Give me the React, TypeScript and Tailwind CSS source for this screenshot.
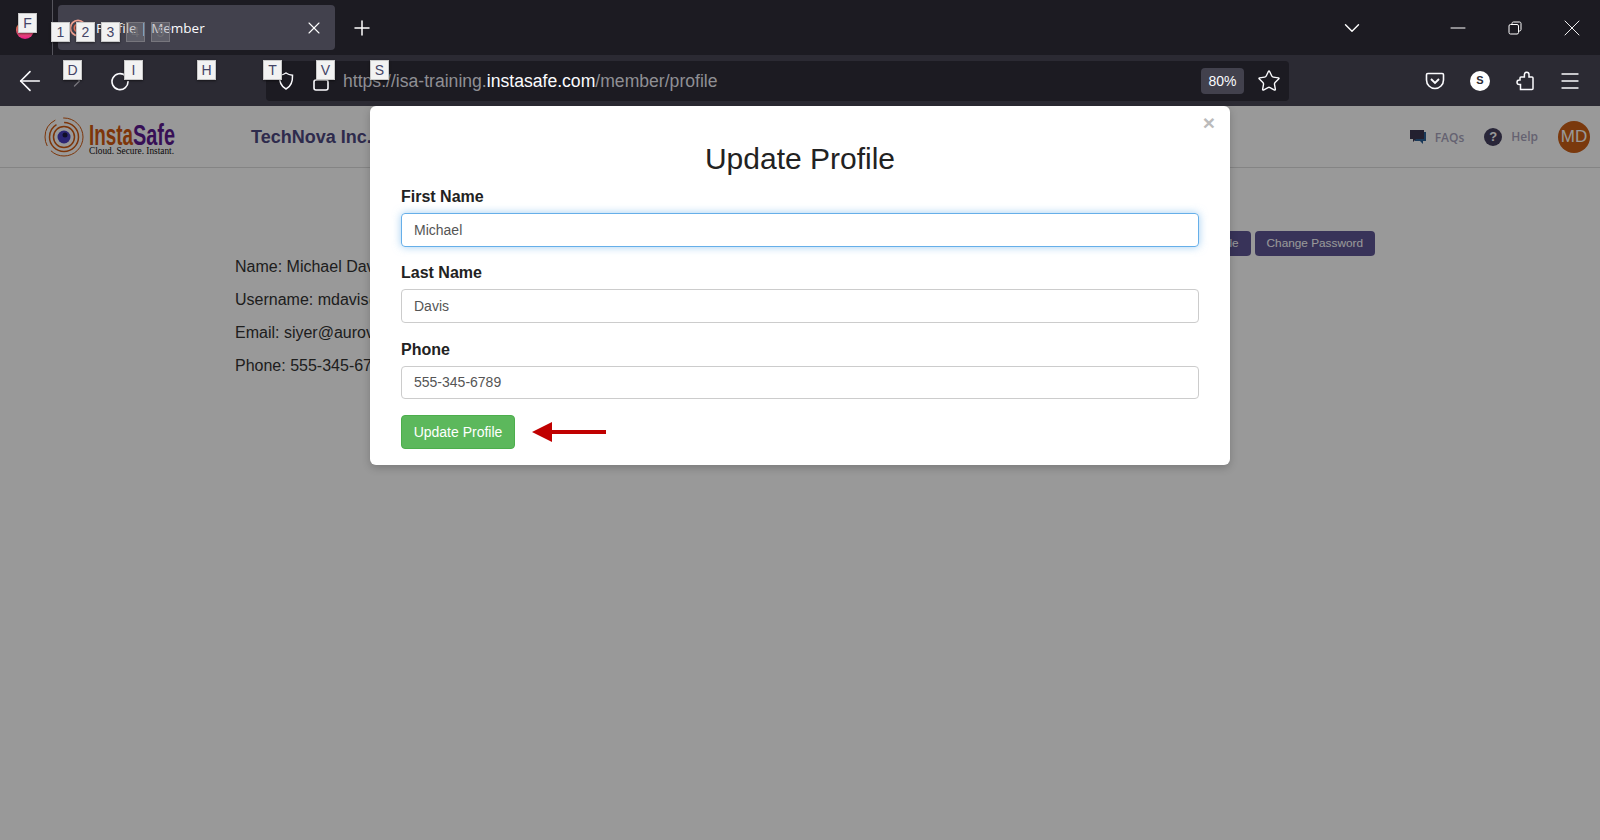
import { ArrowLeft, ChevronDown, ChevronRight, Menu, Minus, Plus, Star, X } from "lucide-react";

const hints = [
  { label: "F", pos: "left-[18px] top-[13px]", dim: false },
  { label: "1", pos: "left-[51px] top-[22px]", dim: false },
  { label: "2", pos: "left-[76px] top-[22px]", dim: false },
  { label: "3", pos: "left-[101px] top-[22px]", dim: false },
  { label: "4", pos: "left-[126px] top-[22px]", dim: true },
  { label: "5", pos: "left-[151px] top-[22px]", dim: true },
  { label: "D", pos: "left-[63px] top-[60px]", dim: false },
  { label: "I", pos: "left-[124px] top-[60px]", dim: false },
  { label: "H", pos: "left-[197px] top-[60px]", dim: false },
  { label: "T", pos: "left-[263px] top-[60px]", dim: false },
  { label: "V", pos: "left-[316px] top-[60px]", dim: false },
  { label: "S", pos: "left-[370px] top-[60px]", dim: false },
];

function Logo() {
  return (
    <svg width="136" height="44" viewBox="0 0 136 44" fill="none">
      <circle cx="20" cy="22" r="19" stroke="#d0590f" strokeWidth="1" strokeDasharray="44 6 30 8" />
      <circle cx="20" cy="22" r="14.5" stroke="#d0590f" strokeWidth="1.5" strokeDasharray="60 8" />
      <circle cx="20" cy="22" r="10.5" stroke="#d0590f" strokeWidth="1.5" />
      <circle cx="20" cy="22" r="6.5" fill="#4a3fc0" />
      <circle cx="21" cy="20" r="2.5" fill="#1c1840" />
      <text x="45" y="30" fontFamily="Liberation Sans, sans-serif" fontWeight="700" fontSize="29" textLength="44" lengthAdjust="spacingAndGlyphs" fill="#d0590f">
        Insta
      </text>
      <text x="89" y="30" fontFamily="Liberation Sans, sans-serif" fontWeight="700" fontSize="29" textLength="42" lengthAdjust="spacingAndGlyphs" fill="#5c1a90">
        Safe
      </text>
      <text x="45" y="39" fontFamily="Liberation Serif, serif" fontSize="10" textLength="85" lengthAdjust="spacingAndGlyphs" fill="#111">
        Cloud. Secure. Instant.
      </text>
    </svg>
  );
}

function Field({ label, value, focused, inputClass }: { label: string; value: string; focused?: boolean; inputClass: string }) {
  return (
    <div>
      <label className="block text-[16px] font-bold leading-[20px] text-[#222]">{label}</label>
      <input
        readOnly
        value={value}
        className={`mt-[6px] block w-full rounded border px-3 pb-[1px] text-[14px] text-[#555] outline-none ${inputClass} ${
          focused ? "border-[#66afe9] shadow-[0_0_8px_rgba(102,175,233,0.6)]" : "border-[#ccc]"
        }`}
      />
    </div>
  );
}

export default function App() {
  return (
    <div className="relative flex h-[840px] w-[1600px] flex-col overflow-hidden bg-white font-['Liberation_Sans',sans-serif]">
      {/* tab strip */}
      <div className="flex h-[55px] items-center bg-[#1c1b22] text-white">
        <div className="flex h-full w-[53px] items-center border-r border-[#55545c] pl-[16px]">
          <div className="mt-[4px] h-[18px] w-[18px] rounded-full bg-gradient-to-b from-[#ff9a2e] to-[#e31587]" />
        </div>
        <div className="ml-[5px] flex h-[45px] w-[277px] items-center rounded bg-[#42414d] pl-[11px] pr-[11px]">
          <svg width="18" height="18" viewBox="0 0 20 20" fill="none" className="shrink-0">
            <circle cx="10" cy="10" r="8.5" stroke="#f0a090" strokeWidth="2" />
            <circle cx="10" cy="10" r="4" stroke="#e9735a" strokeWidth="2" />
          </svg>
          <span className="ml-[9px] mt-[1px] font-['Open_Sans',sans-serif] text-[13.5px] text-[#fbfbfe]">Profile | Member</span>
          <X className="ml-auto" size={20} strokeWidth={1.3} />
        </div>
        <Plus className="ml-[15px]" size={24} strokeWidth={1.5} />
        <div className="ml-auto flex items-center">
          <div className="mr-[61px] flex w-8 justify-center">
            <ChevronDown size={26} strokeWidth={1.3} />
          </div>
          <div className="flex w-[57px] justify-center">
            <Minus size={24} strokeWidth={1} />
          </div>
          <div className="flex w-[57px] justify-center">
            <svg width="14" height="14" viewBox="0 0 14 14" fill="none" stroke="#fff" strokeWidth="1">
              <rect x="1" y="3.5" width="9.5" height="9.5" rx="1.5" />
              <path d="M4 3.5V2.500C4 1.600 4.600 1 5.500 1h6C12.400 1 13 1.600 13 2.500v6c0 .9-.6 1.500-1.500 1.500h-1" />
            </svg>
          </div>
          <div className="flex w-[57px] justify-center">
            <X size={28} strokeWidth={0.8} />
          </div>
        </div>
      </div>

      {/* toolbar */}
      <div className="flex h-[51px] items-center bg-[#2b2a33] text-[#fbfbfe]">
        <div className="ml-2 flex w-[44px] justify-center">
          <ArrowLeft size={32} strokeWidth={1.2} />
        </div>
        <div className="ml-[3px] flex w-[44px] justify-center text-[#77767d]">
          <ChevronRight size={20} strokeWidth={1.6} />
        </div>
        <div className="ml-[-1px] flex w-[44px] justify-center">
          <svg width="20" height="20" viewBox="0 0 20 20" fill="none" stroke="#fbfbfe" strokeWidth="1.6">
            <path d="M15.500 4.800A8 8 0 1 0 18 10" />
          </svg>
        </div>
        <div className="ml-[124px] flex h-[40px] w-[1023px] items-center rounded bg-[#1c1b22] pl-[11px] pr-[8px]">
          <svg width="18" height="20" viewBox="0 0 18 20" fill="none" stroke="#fbfbfe" strokeWidth="1.5">
            <path d="M9 2c2 1.400 4 2 6.500 2.200C15.800 11 14 15.500 9 18 4 15.500 2.200 11 2.500 4.200 5 4 7 3.400 9 2z" />
          </svg>
          <svg className="ml-[18px]" width="16" height="20" viewBox="0 0 16 20" fill="none" stroke="#fbfbfe" strokeWidth="1.6">
            <rect x="1" y="9" width="14" height="10" rx="2" />
            <path d="M4 9V6a4 4 0 0 1 8 0v3" />
          </svg>
          <div className="ml-[14px] mt-[1px] text-[17.6px] text-[#8f8f94]">
            https://isa-training.<span className="text-[#fbfbfe]">instasafe.com</span>/member/profile
          </div>
          <div className="ml-auto mt-[1px] flex h-[26px] w-[43px] items-center justify-center rounded bg-[#42414d] text-[14px] text-[#fbfbfe]">
            80%
          </div>
          <Star className="ml-[13px]" size={24} strokeWidth={1.4} />
        </div>
        <div className="ml-auto mr-2 flex items-center">
          <div className="mr-[1px] flex w-[44px] justify-center">
            <svg width="20" height="18" viewBox="0 0 20 18" fill="none" stroke="#fbfbfe" strokeWidth="1.6">
              <path d="M2.800 1.500h14.400c.8 0 1.300.5 1.300 1.300V8a8.500 8.500 0 0 1-17 0V2.800c0-.8.5-1.300 1.300-1.300z" />
              <path d="M6 7l4 4 4-4" strokeWidth="1.900" />
            </svg>
          </div>
          <div className="mr-[2px] flex w-[44px] justify-center">
            <div className="flex h-5 w-5 items-center justify-center rounded-full bg-white text-[11px] font-bold text-[#2b2a33]">S</div>
          </div>
          <div className="flex w-[44px] justify-center">
            <svg width="20" height="21" viewBox="0 0 20 21" fill="none" stroke="#fbfbfe" strokeWidth="1.5">
              <path d="M4.500 19.500H16a1 1 0 0 0 1-1V8a1 1 0 0 0-1-1h-3V4.500a2.300 2.300 0 0 0-4.600 0V7H5a1 1 0 0 0-1 1v2H3.300a2.300 2.300 0 0 0 0 4.600H4.500z" />
            </svg>
          </div>
          <div className="flex w-[44px] justify-center">
            <Menu size={24} strokeWidth={1.4} />
          </div>
        </div>
      </div>

      {/* page under the dialog */}
      <div className="relative flex-1 bg-white">
        <div className="flex h-[62px] items-center border-b border-[#ddd] pl-[44px] pr-[10px]">
          <Logo />
          <div className="ml-[71px] mt-[2px] text-[18px] font-bold text-[#4e4880]">TechNova Inc.</div>
          <div className="ml-auto flex items-center font-['Open_Sans',sans-serif] text-[12px] font-semibold text-[#a8a4bc]">
            <svg width="18" height="16" viewBox="0 0 18 16" className="mr-[8px]">
              <path d="M4 3h13v9h-3v3l-3-3H6z" fill="#2c5f94" />
              <path d="M1 1h14v9H7l-3 3v-3H1z" fill="#3b3650" />
            </svg>
            <span className="mt-[2px]">FAQs</span>
            <div className="ml-[20px] mr-[9px] flex h-[18px] w-[18px] items-center justify-center rounded-full bg-[#45405f] font-['Liberation_Sans',sans-serif] text-[13px] font-bold text-white">?</div>
            <span>Help</span>
            <div className="ml-[20px] flex h-[32px] w-[32px] items-center justify-center rounded-full bg-[#cc5f16] font-['Liberation_Sans',sans-serif] text-[17px] font-normal text-white">MD</div>
          </div>
        </div>
        <div className="flex justify-end pr-[225px] pt-[63px]">
          <div className="flex h-[25px] items-center rounded-sm bg-[#5e5695] px-3 text-[11.8px] text-white">Update Profile</div>
          <div className="ml-[4px] flex h-[25px] items-center rounded-sm bg-[#5e5695] px-3 text-[11.8px] text-white">Change Password</div>
        </div>
        <div className="mt-[1px] flex flex-col gap-[13px] pl-[235px] text-[16px] leading-[20px] text-[#333]">
          <p>Name: Michael Davis</p>
          <p>Username: mdavis@</p>
          <p>Email: siyer@aurov</p>
          <p>Phone: 555-345-6789</p>
        </div>

        {/* dialog */}
        <div className="absolute inset-0 flex justify-center bg-black/40">
          <div className="relative h-[359px] w-[860px] rounded-md bg-white px-[31px] shadow-[0_3px_9px_rgba(0,0,0,0.2)]">
            <span className="absolute right-[15px] top-[5px] text-[21px] font-bold leading-[24px] text-[#bbb]">×</span>
            <h1 className="pt-[33px] text-center text-[30px] font-normal leading-[40px] text-[#222]">Update Profile</h1>
            <div className="mt-[8px] flex flex-col gap-[16px]">
              <Field label="First Name" value="Michael" focused inputClass="h-[34px]" />
              <Field label="Last Name" value="Davis" inputClass="h-[34px]" />
              <div className="mt-[1px]">
                <Field label="Phone" value="555-345-6789" inputClass="h-[33px]" />
              </div>
            </div>
            <div className="mt-[16px] flex items-center">
              <button className="h-[34px] w-[114px] rounded border border-[#4cae4c] bg-[#5cb85c] text-[14px] text-white">Update Profile</button>
              <svg className="ml-[17px]" width="74" height="20" viewBox="0 0 74 20">
                <path d="M0 10 20 0v8h54v4H20v8z" fill="#c00000" />
              </svg>
            </div>
          </div>
        </div>
      </div>

      {/* keyboard hints from the browser extension */}
      {hints.map((h) => (
        <div
          key={h.label}
          className={`absolute flex h-[20px] w-[19px] items-center justify-center border text-[14px] ${h.pos} ${
            h.dim ? "border-[#77767d] bg-[#8a8a90]/40 text-[#6f6f75]" : "border-[#c8c8c8] bg-[#f2f2f2] text-[#446] shadow-[0_1px_2px_rgba(0,0,0,0.5)]"
          }`}
        >
          {h.label}
        </div>
      ))}
    </div>
  );
}
